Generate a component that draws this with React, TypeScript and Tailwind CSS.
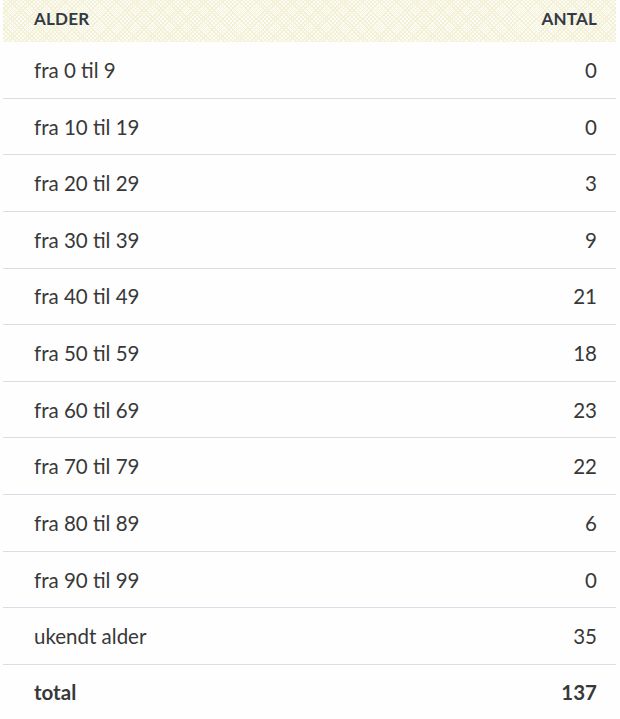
import React from "react";

const rows: [string, string][] = [
  ["fra 0 til 9", "0"],
  ["fra 10 til 19", "0"],
  ["fra 20 til 29", "3"],
  ["fra 30 til 39", "9"],
  ["fra 40 til 49", "21"],
  ["fra 50 til 59", "18"],
  ["fra 60 til 69", "23"],
  ["fra 70 til 79", "22"],
  ["fra 80 til 89", "6"],
  ["fra 90 til 99", "0"],
  ["ukendt alder", "35"],
];

export default function App() {
  return (
    <div className="w-[620px] h-[719px] bg-[#fefefe] pl-[3px] pr-[4px] text-[#383838] font-['Lato',sans-serif] overflow-hidden">
      <div className="flex items-start justify-between h-[42px] pt-[6px] pl-[31px] pr-[19px] bg-[#fcfcf4] bg-[repeating-linear-gradient(45deg,#f3f0d8_0_1px,transparent_1px_3px),repeating-linear-gradient(-45deg,#f3f0d8_0_1px,transparent_1px_3px)] text-[17px] font-bold text-[#333a44] tracking-[0.2px]">
        <span>ALDER</span>
        <span>ANTAL</span>
      </div>
      {rows.map(([a, b]) => (
        <div
          key={a}
          className="flex items-center justify-between h-[56.64px] pl-[31px] pr-[19px] pt-[1px] border-b border-[#d7dee6] text-[20.5px]"
        >
          <span>{a}</span>
          <span>{b}</span>
        </div>
      ))}
      <div className="flex items-center justify-between h-[54px] pl-[31px] pr-[19px] text-[20.5px] font-bold">
        <span>total</span>
        <span>137</span>
      </div>
    </div>
  );
}
